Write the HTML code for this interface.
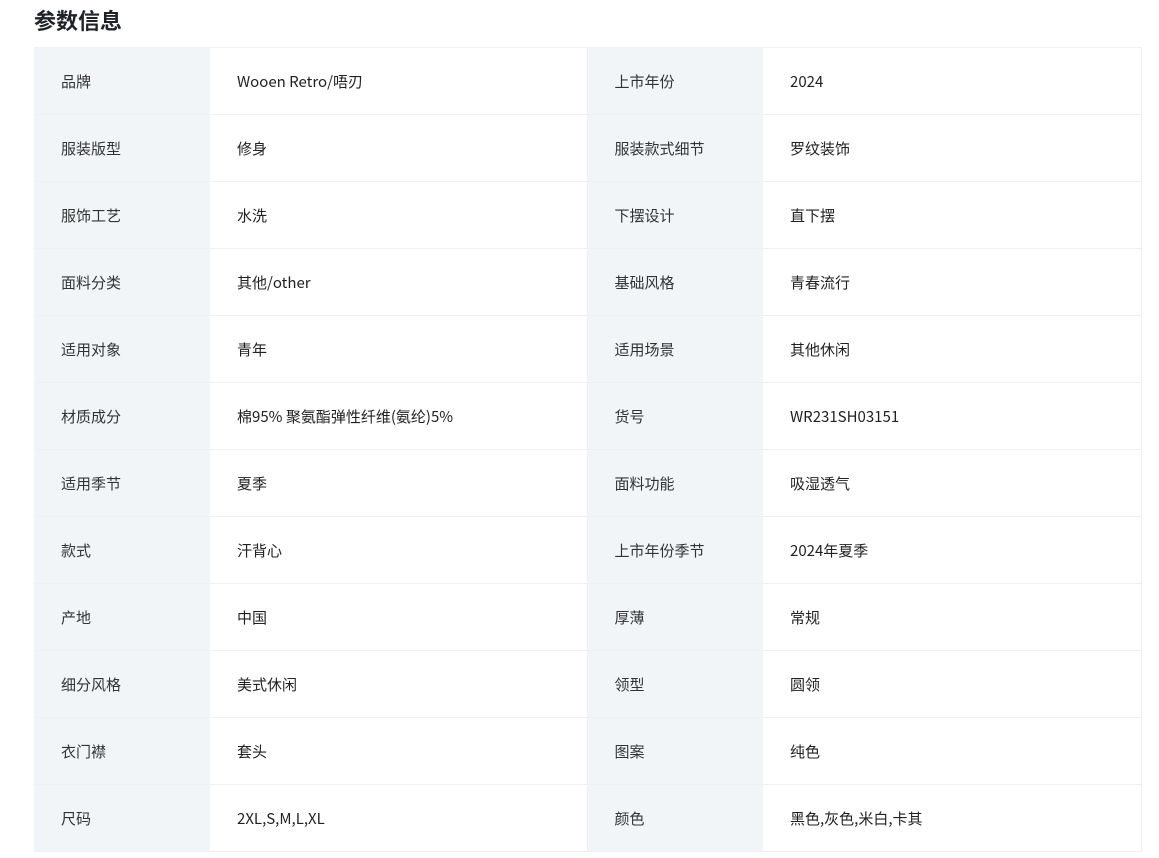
<!DOCTYPE html>
<html><head><meta charset="utf-8"><style>
body{margin:0;background:#fff;font-family:"Noto Sans CJK SC",sans-serif;color:#222;}
h2{position:absolute;left:34px;top:4px;margin:0;font-size:22px;font-weight:bold;line-height:32px;color:#1f2329;}
table{position:absolute;left:34px;top:47px;width:1107px;border-collapse:collapse;table-layout:fixed;}
td{height:66px;border-bottom:1px solid #eef0f3;font-size:15px;padding:0;vertical-align:middle;}
td.l{background:#f2f5f8;padding-left:27px;color:#333;}
td.v{padding-left:27px;border-right:1px solid #eef0f3;}
tr:first-child td{border-top:1px solid #f0f2f5;}
</style></head><body>
<h2>参数信息</h2>
<table>
<colgroup><col style="width:176px"><col style="width:377px"><col style="width:176px"><col style="width:378px"></colgroup>
<tr><td class="l">品牌</td><td class="v">Wooen Retro/唔刃</td><td class="l">上市年份</td><td class="v">2024</td></tr>
<tr><td class="l">服装版型</td><td class="v">修身</td><td class="l">服装款式细节</td><td class="v">罗纹装饰</td></tr>
<tr><td class="l">服饰工艺</td><td class="v">水洗</td><td class="l">下摆设计</td><td class="v">直下摆</td></tr>
<tr><td class="l">面料分类</td><td class="v">其他/other</td><td class="l">基础风格</td><td class="v">青春流行</td></tr>
<tr><td class="l">适用对象</td><td class="v">青年</td><td class="l">适用场景</td><td class="v">其他休闲</td></tr>
<tr><td class="l">材质成分</td><td class="v">棉95% 聚氨酯弹性纤维(氨纶)5%</td><td class="l">货号</td><td class="v">WR231SH03151</td></tr>
<tr><td class="l">适用季节</td><td class="v">夏季</td><td class="l">面料功能</td><td class="v">吸湿透气</td></tr>
<tr><td class="l">款式</td><td class="v">汗背心</td><td class="l">上市年份季节</td><td class="v">2024年夏季</td></tr>
<tr><td class="l">产地</td><td class="v">中国</td><td class="l">厚薄</td><td class="v">常规</td></tr>
<tr><td class="l">细分风格</td><td class="v">美式休闲</td><td class="l">领型</td><td class="v">圆领</td></tr>
<tr><td class="l">衣门襟</td><td class="v">套头</td><td class="l">图案</td><td class="v">纯色</td></tr>
<tr><td class="l">尺码</td><td class="v">2XL,S,M,L,XL</td><td class="l">颜色</td><td class="v">黑色,灰色,米白,卡其</td></tr>
</table>
</body></html>
